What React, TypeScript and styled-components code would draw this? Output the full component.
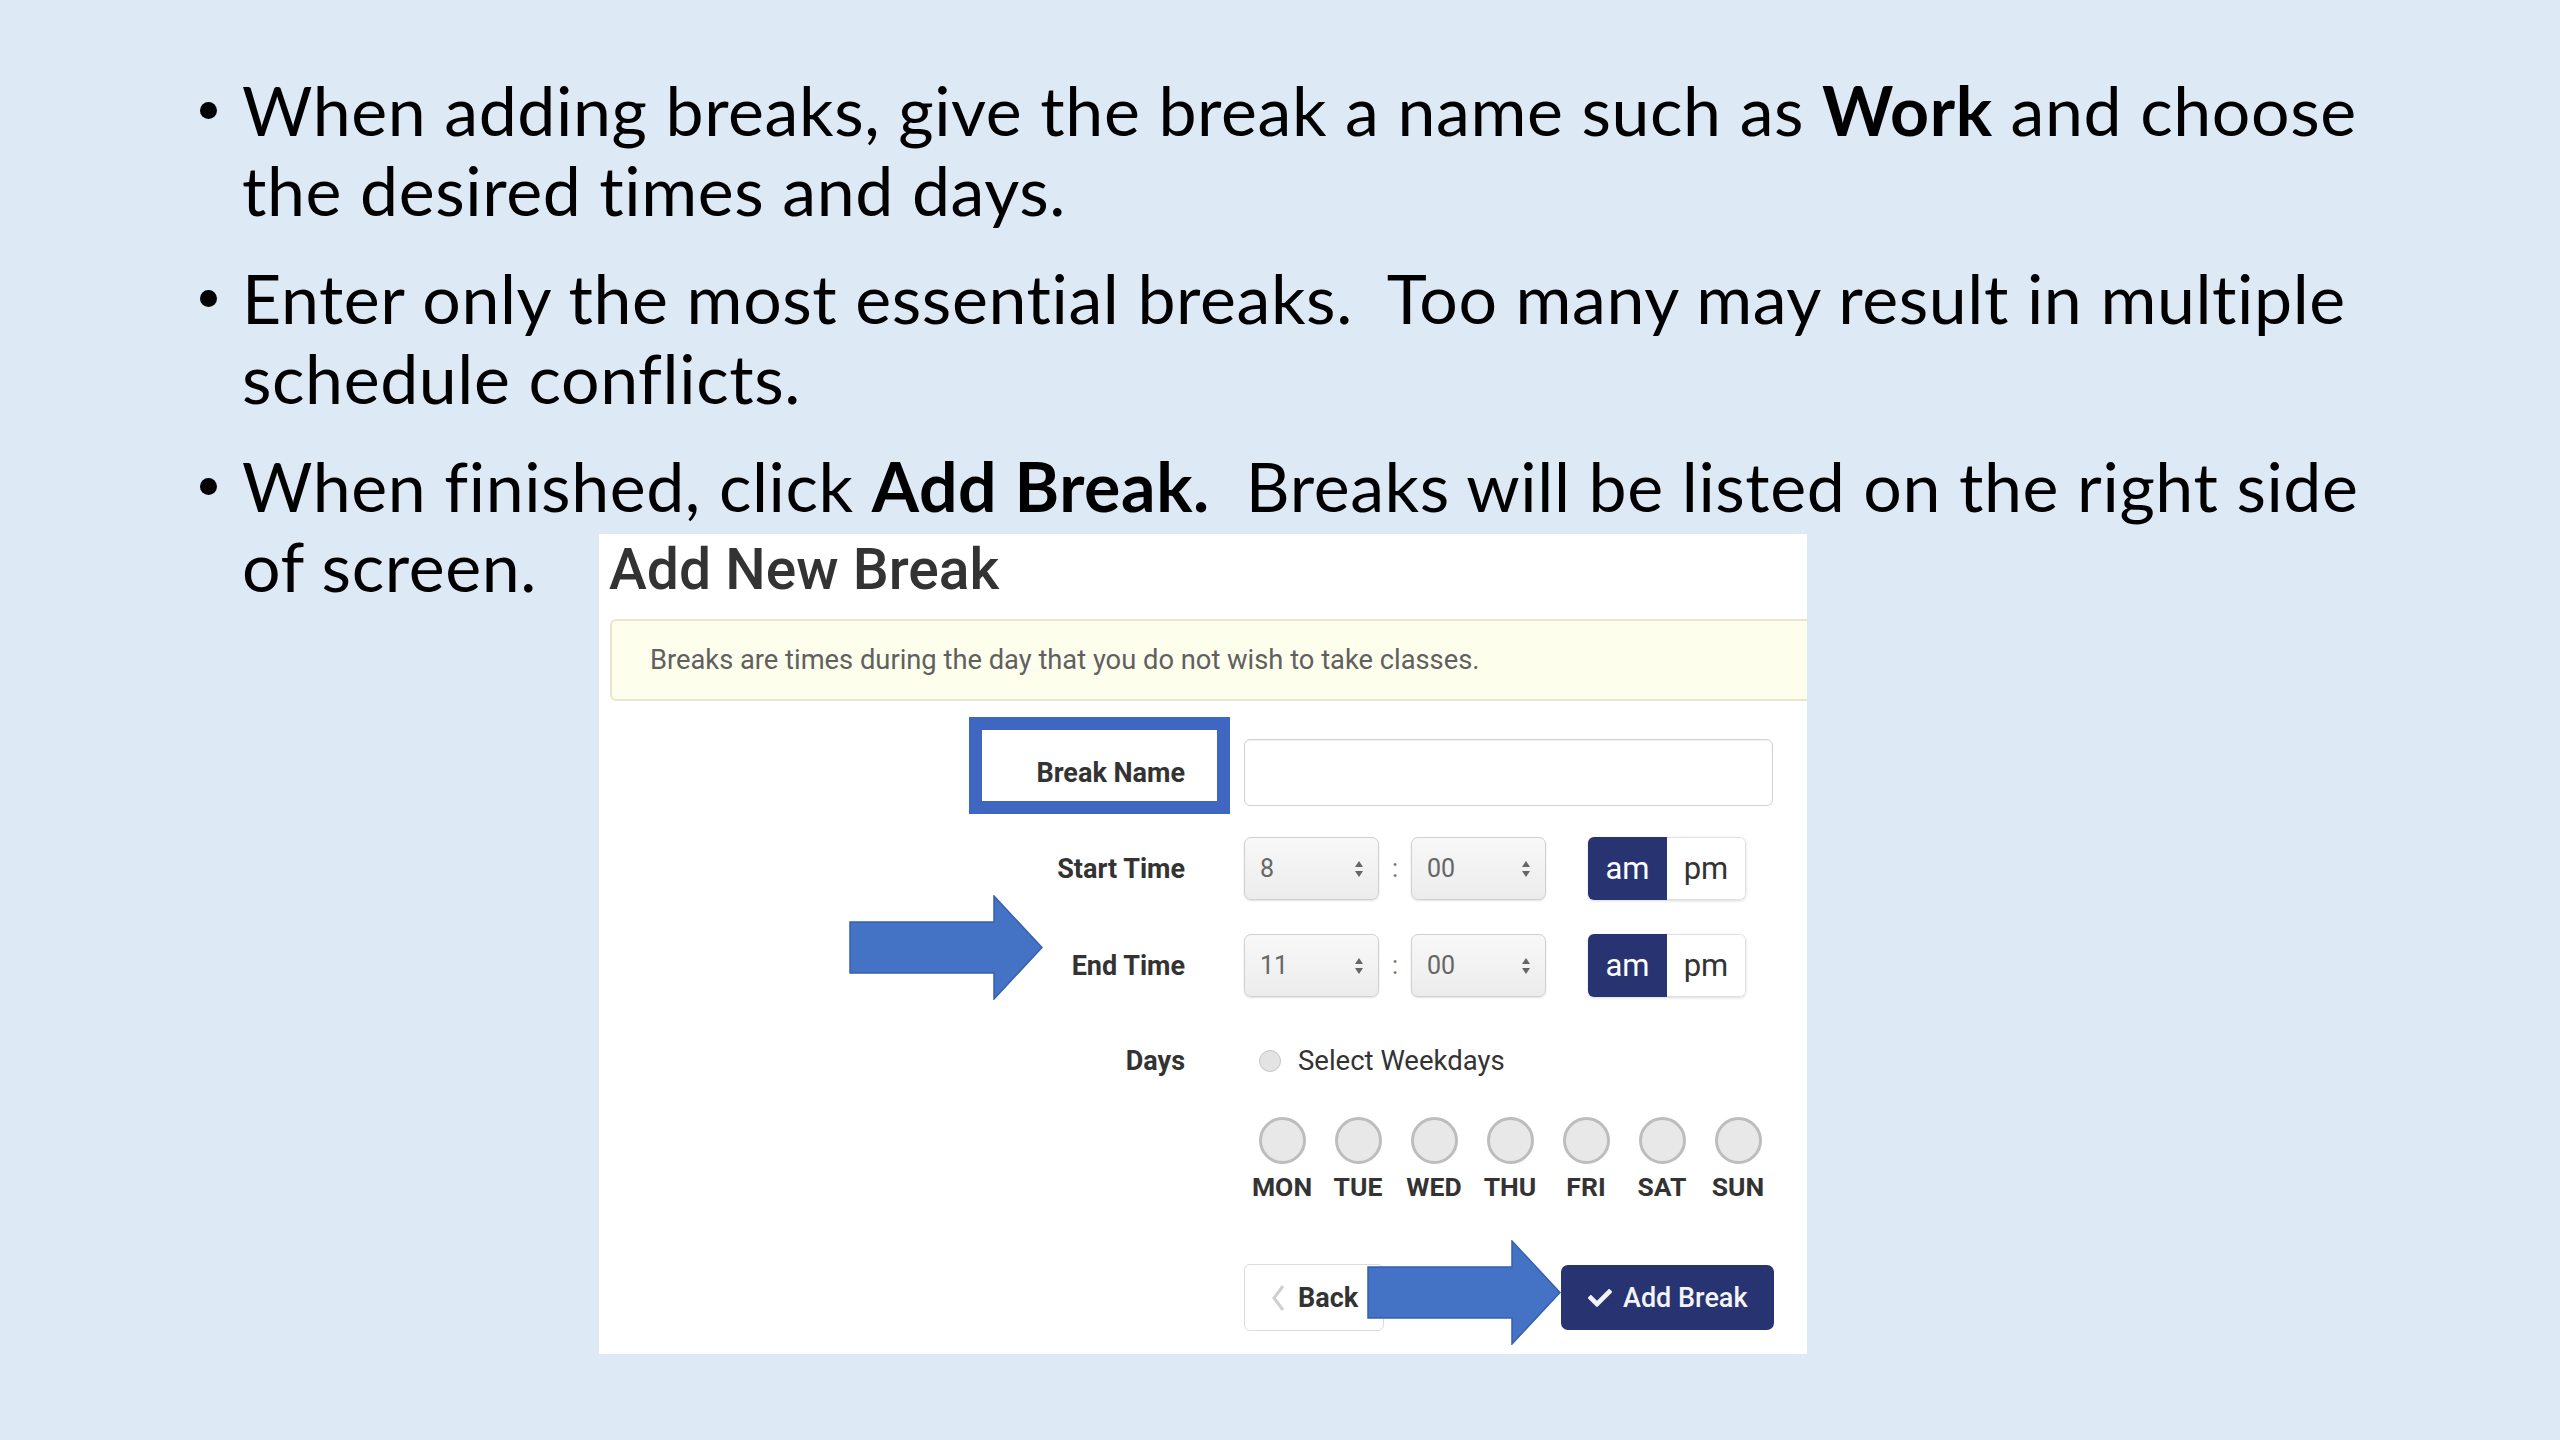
import React from 'react';
import styled, {createGlobalStyle} from "styled-components";
import {FaCheck} from "react-icons/fa";

const GlobalStyle = createGlobalStyle`
    body {
        margin: 0;
        background: #dee9f6;
    }
`

const days = ['MON', 'TUE', 'WED', 'THU', 'FRI', 'SAT', 'SUN'];

const Spinner = () => (
    <svg width="10" height="18" viewBox="0 0 10 18">
        <polygon points="5,1 9,7 1,7" fill="#666"/>
        <polygon points="1,11 9,11 5,17" fill="#666"/>
    </svg>
);

const BlueArrow = () => (
    <svg width="194" height="105" viewBox="0 0 194 105">
        <polygon points="1,27 145,27 145,1 193,52.5 145,104 145,78 1,78" fill="#4472c4" stroke="#3660b0"
                 strokeWidth="1.5"/>
    </svg>
);

const TimeSelect = ({value}: { value: string }) => (
    <Select>
        <span>{value}</span>
        <Spinner/>
    </Select>
);

const TimeControls = ({hour}: { hour: string }) => (
    <Controls>
        <TimeSelect value={hour}/>
        <Colon>:</Colon>
        <TimeSelect value="00"/>
        <Meridiem>
            <MeridiemOption $active>am</MeridiemOption>
            <MeridiemOption>pm</MeridiemOption>
        </Meridiem>
    </Controls>
);

const AddBreakPanel = () => (
    <Panel>
        <Title>Add New Break</Title>
        <Alert>Breaks are times during the day that you do not wish to take classes.</Alert>
        <FormRow $gap={38} $h={67}>
            <Label $highlight>Break Name</Label>
            <TextInput/>
        </FormRow>
        <FormRow $gap={31} $h={63}>
            <Label>Start Time</Label>
            <TimeControls hour="8"/>
        </FormRow>
        <FormRow $gap={34} $h={63}>
            <Label>End Time</Label>
            <TimeControls hour="11"/>
        </FormRow>
        <FormRow $gap={47} $h={30}>
            <Label>Days</Label>
            <RadioLine>
                <Radio/>
                Select Weekdays
            </RadioLine>
        </FormRow>
        <FormRow $gap={43} $h={85}>
            <span/>
            <DayPicker>
                {days.map(d => (
                    <DayItem key={d}>
                        <DayCircle/>
                        <DayName>{d}</DayName>
                    </DayItem>
                ))}
            </DayPicker>
        </FormRow>
        <FormRow $gap={62} $h={67}>
            <span/>
            <Buttons>
                <BackButton>
                    <svg width="14" height="28" viewBox="0 0 14 28">
                        <polyline points="12,2 3,14 12,26" fill="none" stroke="#cfcfcf" strokeWidth="3"/>
                    </svg>
                    Back
                </BackButton>
                <PrimaryButton>
                    <FaCheck size={24}/>
                    Add Break
                </PrimaryButton>
            </Buttons>
        </FormRow>
        <ArrowMark $left={250} $top={361}><BlueArrow/></ArrowMark>
        <ArrowMark $left={768} $top={706}><BlueArrow/></ArrowMark>
    </Panel>
);

export default function App() {
    return (
        <Slide>
            <GlobalStyle/>
            <BulletList>
                <Item>
                    <Bullet/>
                    <div>
                        <Line>When adding breaks, give the break a name such as <b>Work</b> and choose</Line>
                        <Line>the desired times and days.</Line>
                    </div>
                </Item>
                <Item>
                    <Bullet/>
                    <div>
                        <Line>Enter only the most essential breaks.{'\u00a0 '}Too many may result in multiple</Line>
                        <Line>schedule conflicts.</Line>
                    </div>
                </Item>
                <Item>
                    <Bullet/>
                    <div>
                        <Line>When finished, click <b>Add Break.</b>{'\u00a0 '}Breaks will be listed on the right side</Line>
                        <TailRow>
                            <TailText>of screen.</TailText>
                            <AddBreakPanel/>
                        </TailRow>
                    </div>
                </Item>
            </BulletList>
        </Slide>
    );
}

const Slide = styled.div`
    width: 2560px;
    height: 1440px;
    overflow: hidden;
    background: #dee9f6;
    font-family: Lato, "Open Sans", sans-serif;
    color: #000;
`

const BulletList = styled.ul`
    list-style: none;
    margin: 0;
    padding: 70px 0 0 200px;
    display: flex;
    flex-direction: column;
    gap: 28px;
`

const Item = styled.li`
    display: flex;
    align-items: flex-start;
`

const Bullet = styled.span`
    flex: none;
    width: 17px;
    height: 17px;
    border-radius: 50%;
    background: #000;
    margin: 32px 25px 0 0;
`

const Line = styled.div`
    font-size: 68px;
    line-height: 80px;
    letter-spacing: 0.6px;
    font-variant-ligatures: none;
    white-space: nowrap;

    b {
        font-weight: 700;
    }
`

const TailRow = styled.div`
    display: flex;
    align-items: flex-start;
`

const TailText = styled(Line)`
    width: 357px;
    flex: none;
`

const Panel = styled.section`
    position: relative;
    width: 1208px;
    margin-top: 8px;
    padding: 3px 34px 23px 0;
    box-sizing: border-box;
    background: #fff;
    overflow: hidden;
    font-family: Roboto, "Liberation Sans", sans-serif;
    color: #333;
`

const Title = styled.h1`
    margin: 0 0 0 10px;
    font-size: 57px;
    line-height: 66px;
    font-weight: 500;
    color: #333;
`

const Alert = styled.div`
    margin: 16px -40px 0 11px;
    height: 82px;
    box-sizing: border-box;
    display: flex;
    align-items: center;
    padding-left: 38px;
    background: #fefeec;
    border: 2px solid #e9e6d0;
    border-radius: 6px;
    font-size: 27.3px;
    color: #606060;
`

const FormRow = styled.div<{ $gap: number; $h: number }>`
    display: grid;
    grid-template-columns: 586px 1fr;
    column-gap: 59px;
    align-items: center;
    margin-top: ${p => p.$gap}px;
    height: ${p => p.$h}px;
`

const Label = styled.label<{ $highlight?: boolean }>`
    position: relative;
    align-self: stretch;
    display: flex;
    align-items: center;
    justify-content: flex-end;
    font-size: 27px;
    font-weight: 700;
    color: #333;

    &::before {
        content: '';
        display: ${p => p.$highlight ? 'block' : 'none'};
        position: absolute;
        left: 370px;
        right: -45px;
        top: -22px;
        bottom: -8px;
        border: 13px solid #3f67c2;
    }
`

const TextInput = styled.div`
    height: 67px;
    box-sizing: border-box;
    border: 1.5px solid #d2d2d2;
    border-radius: 6px;
    background: #fff;
    box-shadow: inset 0 1px 2px rgba(0, 0, 0, 0.06);
`

const Controls = styled.div`
    display: flex;
    align-items: center;
    height: 63px;
`

const Select = styled.div`
    width: 135px;
    height: 63px;
    box-sizing: border-box;
    display: flex;
    align-items: center;
    justify-content: space-between;
    padding: 0 14px 0 15px;
    background: linear-gradient(#f8f8f8, #ececec);
    border: 1.5px solid #d0d0d0;
    border-radius: 7px;
    box-shadow: 0 1px 2px rgba(0, 0, 0, 0.12);
    font-size: 25px;
    color: #666;
`

const Colon = styled.span`
    width: 32px;
    text-align: center;
    font-size: 25px;
    color: #777;
`

const Meridiem = styled.div`
    display: flex;
    height: 63px;
    margin-left: 42px;
    border-radius: 6px;
    overflow: hidden;
    box-shadow: 0 1px 3px rgba(0, 0, 0, 0.15);
`

const MeridiemOption = styled.span<{ $active?: boolean }>`
    width: 79px;
    display: flex;
    align-items: center;
    justify-content: center;
    box-sizing: border-box;
    font-size: 31px;
    background: ${p => p.$active ? '#283372' : '#fff'};
    color: ${p => p.$active ? '#fff' : '#333'};
    border: ${p => p.$active ? 'none' : '1.5px solid #e0e0e0'};
    border-left: none;
    border-radius: ${p => p.$active ? '0' : '0 6px 6px 0'};
`

const RadioLine = styled.div`
    display: flex;
    align-items: center;
    gap: 17px;
    padding-left: 15px;
    font-size: 27.5px;
    color: #333;
`

const Radio = styled.span`
    width: 22px;
    height: 22px;
    box-sizing: border-box;
    border-radius: 50%;
    background: #e3e3e3;
    border: 1.5px solid #c6c6c6;
`

const DayPicker = styled.div`
    display: flex;
    height: 85px;
`

const DayItem = styled.div`
    width: 76px;
    display: flex;
    flex-direction: column;
    align-items: center;
    gap: 8px;
`

const DayCircle = styled.span`
    width: 47px;
    height: 47px;
    box-sizing: border-box;
    border-radius: 50%;
    background: #e8e8e8;
    border: 3px solid #bdbdbd;
`

const DayName = styled.span`
    font-size: 26.5px;
    line-height: 30px;
    font-weight: 700;
    color: #333;
`

const Buttons = styled.div`
    display: flex;
    align-items: center;
    justify-content: space-between;
    height: 67px;
`

const BackButton = styled.button`
    width: 140px;
    height: 67px;
    box-sizing: border-box;
    display: flex;
    align-items: center;
    gap: 13px;
    padding: 0 0 0 26px;
    background: #fff;
    border: 1.5px solid #dcdcdc;
    border-radius: 6px;
    font-family: inherit;
    font-size: 27px;
    font-weight: 700;
    color: #333;
`

const PrimaryButton = styled.button`
    width: 213px;
    height: 65px;
    margin-right: -1px;
    box-sizing: border-box;
    display: flex;
    align-items: center;
    gap: 11px;
    padding: 0 0 0 27px;
    background: #283372;
    border: none;
    border-radius: 7px;
    font-family: inherit;
    font-size: 27px;
    font-weight: 500;
    color: #f4f4f8;
`

const ArrowMark = styled.div<{ $left: number; $top: number }>`
    position: absolute;
    left: ${p => p.$left}px;
    top: ${p => p.$top}px;
    line-height: 0;
`
